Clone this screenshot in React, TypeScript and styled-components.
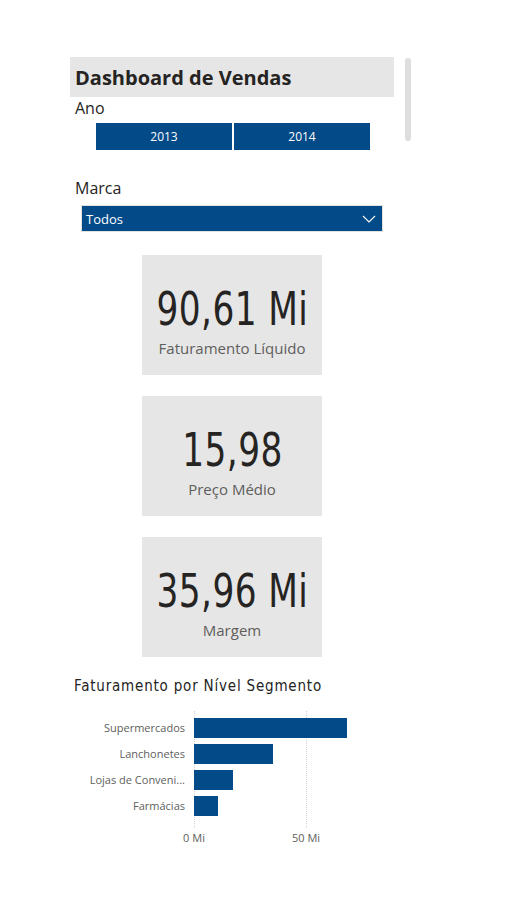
import React from 'react'
import styled, { createGlobalStyle } from 'styled-components'

const GlobalStyle = createGlobalStyle`
	body {
		margin: 0;
		background: #ffffff;
		font-family: 'Open Sans', 'Noto Sans', sans-serif;
	}
`

const BLUE = '#034a89'

const Page = styled.div`
	display: flex;
	align-items: flex-start;
	gap: 11px;
	padding: 57px 0 40px 70px;
`

const Panel = styled.div`
	width: 324px;
	display: flex;
	flex-direction: column;
`

const Scrollbar = styled.div`
	margin-top: 1px;
	width: 6px;
	height: 83px;
	border-radius: 3px;
	background: #dedede;
`

const Title = styled.h1`
	margin: 0;
	height: 40px;
	display: flex;
	align-items: center;
	padding-left: 5px;
	background: #e6e6e6;
	color: #252423;
	font-size: 20px;
	font-weight: 700;
`

const Label = styled.div<{ top: number }>`
	margin-top: ${p => p.top}px;
	padding-left: 5px;
	height: 22px;
	line-height: 22px;
	font-size: 16px;
	color: #252423;
`

const YearRow = styled.div`
	margin: 4px 0 0 26px;
	width: 274px;
	display: grid;
	grid-template-columns: 1fr 1fr;
	gap: 2px;
`

const YearButton = styled.div`
	height: 27px;
	background: ${BLUE};
	color: #ffffff;
	font-size: 12px;
	display: flex;
	align-items: center;
	justify-content: center;
`

const Dropdown = styled.div`
	margin: 6px 0 0 11px;
	width: 302px;
	height: 27px;
	box-sizing: border-box;
	border: 1px solid #e1e1e1;
	background: ${BLUE};
	color: #ffffff;
	font-size: 13px;
	display: flex;
	align-items: center;
	justify-content: space-between;
	padding: 1px 5px 0 4px;
`

const Cards = styled.div`
	margin-top: 23px;
	display: flex;
	flex-direction: column;
	align-items: center;
	gap: 21px;
`

const Card = styled.div`
	width: 180px;
	height: 120px;
	background: #e6e6e6;
	display: flex;
	flex-direction: column;
	align-items: center;
	padding-top: 28px;
	box-sizing: border-box;
`

const Value = styled.div`
	font-family: 'DejaVu Sans Condensed', 'Roboto', sans-serif;
	font-size: 46px;
	line-height: 52px;
	color: #252423;
	letter-spacing: 0.5px;
	white-space: nowrap;
	transform: scaleX(0.83);
`

const Caption = styled.div`
	margin-top: 3px;
	font-size: 15px;
	color: #605e5c;
`

const ChartTitle = styled.div`
	margin: 20px 0 0 4px;
	font-family: 'DejaVu Sans Condensed', 'Roboto', sans-serif;
	font-size: 15px;
	letter-spacing: 0.8px;
	color: #252423;
`

const Chart = styled.div`
	margin-top: 16px;
	display: grid;
	grid-template-columns: 124px 180px;
`

const Labels = styled.div`
	padding: 7px 9px 0 0;
	display: flex;
	flex-direction: column;
	gap: 6px;
`

const CategoryLabel = styled.div`
	height: 20px;
	line-height: 20px;
	text-align: right;
	font-size: 11px;
	color: #605e5c;
	white-space: nowrap;
`

const Plot = styled.div`
	position: relative;
	padding: 7px 0 12px;
	display: flex;
	flex-direction: column;
	gap: 6px;
`

const GridLine = styled.div`
	position: absolute;
	top: 0;
	bottom: 0;
	width: 0;
	border-left: 1px dotted #d4d4d4;
`

const Bar = styled.div`
	position: relative;
	height: 20px;
	background: ${BLUE};
`

const Axis = styled.div`
	position: relative;
	grid-column: 2;
	height: 16px;
	margin-top: 2px;
	font-size: 11px;
	color: #605e5c;
`

const Tick = styled.span`
	position: absolute;
	top: 0;
	transform: translateX(-50%);
	white-space: nowrap;
`

const PX_PER_MI = 112 / 50

const segments = [
	{ name: 'Supermercados', value: 68.3 },
	{ name: 'Lanchonetes', value: 35.3 },
	{ name: 'Lojas de Conveni...', value: 17.4 },
	{ name: 'Farmácias', value: 10.7 },
]

const kpis = [
	{ value: '90,61 Mi', label: 'Faturamento Líquido' },
	{ value: '15,98', label: 'Preço Médio' },
	{ value: '35,96 Mi', label: 'Margem' },
]

const Chevron = () => (
	<svg width="16" height="10" viewBox="0 0 16 10">
		<path d="M2 2 L8 8 L14 2" fill="none" stroke="#ffffff" strokeWidth="1.1" />
	</svg>
)

const App = () => (
	<>
		<GlobalStyle />
		<Page>
			<Panel>
				<Title>Dashboard de Vendas</Title>
				<Label top={0}>Ano</Label>
				<YearRow>
					<YearButton>2013</YearButton>
					<YearButton>2014</YearButton>
				</YearRow>
				<Label top={27}>Marca</Label>
				<Dropdown>
					<span>Todos</span>
					<Chevron />
				</Dropdown>
				<Cards>
					{kpis.map(k => (
						<Card key={k.label}>
							<Value>{k.value}</Value>
							<Caption>{k.label}</Caption>
						</Card>
					))}
				</Cards>
				<ChartTitle>Faturamento por Nível Segmento</ChartTitle>
				<Chart>
					<Labels>
						{segments.map(s => (
							<CategoryLabel key={s.name}>{s.name}</CategoryLabel>
						))}
					</Labels>
					<Plot>
						<GridLine style={{ left: 0 }} />
						<GridLine style={{ left: 50 * PX_PER_MI }} />
						{segments.map(s => (
							<Bar key={s.name} style={{ width: s.value * PX_PER_MI }} />
						))}
					</Plot>
					<Axis>
						<Tick style={{ left: 0 }}>0 Mi</Tick>
						<Tick style={{ left: 50 * PX_PER_MI }}>50 Mi</Tick>
					</Axis>
				</Chart>
			</Panel>
			<Scrollbar />
		</Page>
	</>
)

export default App
